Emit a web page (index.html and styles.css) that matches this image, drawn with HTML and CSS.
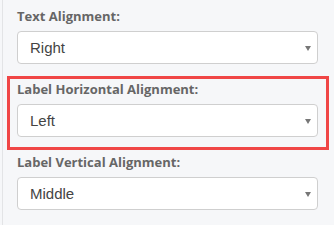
FILE: index.html
```html
<!DOCTYPE html>
<html lang="en">
<head>
  <meta charset="UTF-8" />
  <title>Label settings</title>
  <link rel="stylesheet" href="styles.css">
</head>
<body>
  <div class="panel">
    <div class="field">
      <label class="field-label">Text Alignment:</label>
      <div class="select">
        <span class="select-value">Right</span>
        <span class="caret"></span>
      </div>
    </div>

    <!-- highlighted option -->
    <div class="field highlight">
      <label class="field-label">Label Horizontal Alignment:</label>
      <div class="select">
        <span class="select-value">Left</span>
        <span class="caret"></span>
      </div>
    </div>

    <div class="field">
      <label class="field-label">Label Vertical Alignment:</label>
      <div class="select">
        <span class="select-value">Middle</span>
        <span class="caret"></span>
      </div>
    </div>
  </div>
</body>
</html>
```

FILE: styles.css
```css
body {
  margin: 0;
  background-color: #f6f7f9;
  font-family: "Open Sans", "Liberation Sans", sans-serif;
}
.panel {
  margin-left: 2px;
  border-left: 1px solid #e3e4e6;
  padding: 0 16px 0 14px;
  min-height: 225px;
  box-sizing: border-box;
}
.field {
  padding: 7px 0 9px;
}
.field-label {
  display: block;
  font-size: 13px;
  font-weight: bold;
  line-height: 18px;
  color: #666;
  margin-bottom: 6px;
}
.highlight {
  position: relative;
}
.highlight::before {
  content: "";
  position: absolute;
  top: 3px;
  left: -10px;
  right: -11px;
  bottom: -4px;
  border: 3px solid #f04646;
  pointer-events: none;
}
.select {
  display: flex;
  align-items: center;
  justify-content: space-between;
  height: 33px;
  box-sizing: border-box;
  padding: 0 6px 0 12px;
  background-color: #fff;
  border: 1px solid #cfcfcf;
  border-radius: 4px;
  font-family: "Liberation Sans", Arial, sans-serif;
  font-size: 15px;
  color: #444;
}
.caret {
  width: 0;
  height: 0;
  border-left: 3.5px solid transparent;
  border-right: 3.5px solid transparent;
  border-top: 5px solid #777;
  margin-top: 1px;
}
```
